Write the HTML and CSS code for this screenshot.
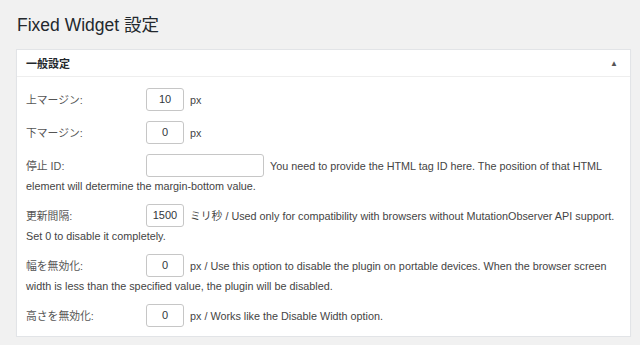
FILE: index.html
```html
<!DOCTYPE html>
<html lang="ja">
<head>
<meta charset="utf-8">
<title>Fixed Widget 設定</title>
<link rel="stylesheet" href="styles.css">
</head>
<body>
<div class="wrap">
  <h1 class="title">Fixed Widget 設定</h1>
  <div class="panel">
    <div class="panel-head">
      <span class="panel-title">一般設定</span>
      <span class="toggle">▲</span>
    </div>
    <div class="panel-body">
      <div class="row"><span class="label">上マージン:</span><span class="input small">10</span><span class="desc">px</span></div>
      <div class="row"><span class="label">下マージン:</span><span class="input small">0</span><span class="desc">px</span></div>
      <div class="row"><span class="label">停止 ID:</span><span class="input wide"></span><span class="desc">You need to provide the HTML tag ID here. The position of that HTML element will determine the margin-bottom value.</span></div>
      <div class="row"><span class="label">更新間隔:</span><span class="input small">1500</span><span class="desc">ミリ秒 / Used only for compatibility with browsers without MutationObserver API support. Set 0 to disable it completely.</span></div>
      <div class="row"><span class="label">幅を無効化:</span><span class="input small">0</span><span class="desc">px / Use this option to disable the plugin on portable devices. When the browser screen width is less than the specified value, the plugin will be disabled.</span></div>
      <div class="row"><span class="label">高さを無効化:</span><span class="input small">0</span><span class="desc">px / Works like the Disable Width option.</span></div>
    </div>
  </div>
</div>
</body>
</html>
```
FILE: styles.css
```css
html, body {
  margin: 0;
  padding: 0;
  background: #f1f1f1;
}
body {
  font-family: "Liberation Sans", "Noto Sans CJK JP", sans-serif;
  color: #444;
}
.wrap {
  padding: 12px 9px 0 16px;
}
.title {
  margin: 0 0 0 1px;
  font-size: 17.5px;
  font-weight: 400;
  line-height: 26px;
  color: #23282d;
  height: 37px;
}
.panel {
  background: #fff;
  border: 1px solid #e2e4e7;
  box-shadow: 0 1px 1px rgba(0,0,0,0.04);
}
.panel-head {
  display: flex;
  align-items: center;
  justify-content: space-between;
  height: 26px;
  padding: 0 12px 0 9px;
  border-bottom: 1px solid #eee;
}
.panel-title {
  font-size: 11px;
  font-weight: 700;
  color: #23282d;
}
.toggle {
  font-size: 8px;
  color: #555;
}
.panel-body {
  padding: 11px 12px 9px 9px;
  font-size: 10.8px;
}
.row {
  line-height: 16px;
  margin-bottom: 10px;
}
.row:last-child {
  margin-bottom: 0;
}
.label {
  display: inline-block;
  width: 120px;
  vertical-align: middle;
  color: #555;
}
.input {
  display: inline-block;
  box-sizing: border-box;
  height: 23px;
  line-height: 21px;
  border: 1px solid #c6c6c6;
  border-radius: 3px;
  background: #fff;
  text-align: center;
  vertical-align: middle;
  color: #32373c;
  font-size: 11px;
  margin-right: 6px;
}
.small { width: 38px; }
.wide { width: 118px; }
.desc {
  color: #444;
  vertical-align: middle;
}
```
